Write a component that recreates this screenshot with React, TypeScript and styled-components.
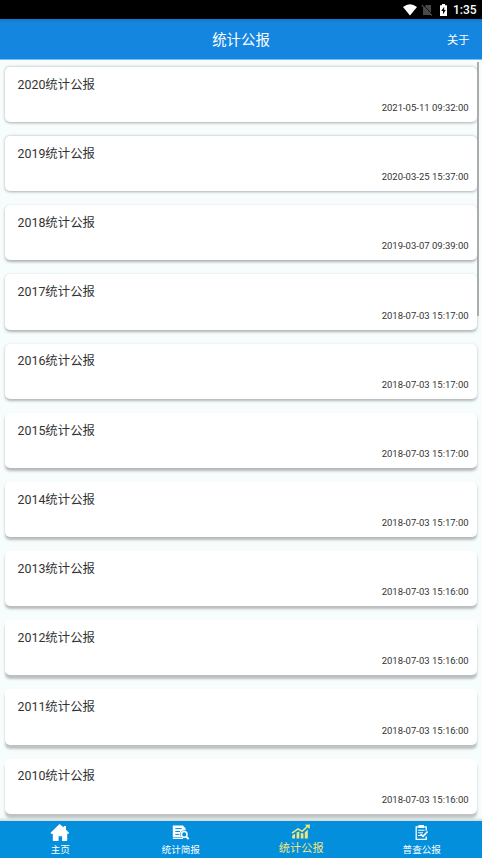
import React from "react";
import styled, { createGlobalStyle } from "styled-components";

const GlobalStyle = createGlobalStyle`
  * { box-sizing: border-box; }
  html, body { margin: 0; padding: 0; overflow: hidden; }
  body { font-family: Roboto, "Noto Sans CJK SC", sans-serif; }
`;

const Screen = styled.div`
  display: flex;
  flex-direction: column;
  width: 482px;
  height: 858px;
  overflow: hidden;
  background: #f7fdfd;
`;

const StatusBar = styled.div`
  flex: none;
  display: flex;
  align-items: center;
  height: 19px;
  padding-left: 403px;
  background: #000;
`;

const StatusIcon = styled.svg<{ $gap: number }>`
  flex: none;
  display: block;
  margin-right: ${(p) => p.$gap}px;
`;

const Clock = styled.span`
  color: #fff;
  font-size: 12px;
  font-weight: 500;
  line-height: 19px;
  white-space: nowrap;
  padding-top: 2px;
`;

const Header = styled.header`
  flex: none;
  display: grid;
  grid-template-columns: 1fr auto 1fr;
  align-items: center;
  height: 41px;
  padding: 2px 12.5px 0;
  background: linear-gradient(#1276c8 0, #1586df 4px, #1586df 40px, #78bdf0 40px);
  color: #fff;
`;

const Title = styled.h1`
  grid-column: 2;
  margin: 0;
  font-size: 14.4px;
  font-weight: 400;
  line-height: 22px;
`;

const About = styled.span`
  justify-self: end;
  font-size: 11.2px;
  line-height: 18px;
`;

const Content = styled.main`
  flex: 1;
  min-height: 0;
  display: flex;
  overflow: hidden;
  background: linear-gradient(#f7fdfd 0, #f7fdfd 757px, #d3d9d9 761px);
`;

const List = styled.div`
  flex: none;
  display: flex;
  flex-direction: column;
  gap: 14px;
  width: 477px;
  padding: 7px 0 0 5px;
`;

const Card = styled.article<{ $depth: number }>`
  flex: none;
  display: flex;
  flex-direction: column;
  justify-content: space-between;
  height: 55.17px;
  padding: 7.8px 8.4px 7px 12.5px;
  border-radius: 5px;
  background: #fff;
  box-shadow: 0 ${(p) => 0.4 + p.$depth * 0.36}px ${(p) => 3 - p.$depth * 0.06}px
    rgba(0, 0, 0, ${(p) => 0.32 - p.$depth * 0.009});
`;

const CardTitle = styled.h2`
  margin: 0;
  color: #333;
  font-size: 12.4px;
  font-weight: 400;
  line-height: 20px;
`;

const CardTime = styled.time`
  align-self: flex-end;
  color: #333;
  font-size: 9.5px;
  line-height: 14px;
`;

const ScrollThumb = styled.div`
  flex: none;
  width: 2px;
  height: 254px;
  margin-top: 2px;
  background: #a9adad;
`;

const Nav = styled.nav`
  flex: none;
  display: grid;
  grid-template-columns: repeat(4, 1fr);
  height: 37px;
  background: #048fdc;
`;

const NavItem = styled.a<{ $active?: boolean }>`
  display: flex;
  flex-direction: column;
  align-items: center;
  padding-top: 3px;
  color: ${(p) => (p.$active ? "#f0e67c" : "#fff")};
  font-size: ${(p) => (p.$active ? 11.2 : 9.6)}px;
  line-height: 14px;
`;

const NavIcon = styled.svg`
  display: block;
  flex: none;
  margin-bottom: 1px;
`;

const reports = [
  ["2020", "2021-05-11 09:32:00"],
  ["2019", "2020-03-25 15:37:00"],
  ["2018", "2019-03-07 09:39:00"],
  ["2017", "2018-07-03 15:17:00"],
  ["2016", "2018-07-03 15:17:00"],
  ["2015", "2018-07-03 15:17:00"],
  ["2014", "2018-07-03 15:17:00"],
  ["2013", "2018-07-03 15:16:00"],
  ["2012", "2018-07-03 15:16:00"],
  ["2011", "2018-07-03 15:16:00"],
  ["2010", "2018-07-03 15:16:00"],
];

const HomeIcon = () => (
  <NavIcon width="20" height="18" viewBox="0 0 20 18">
    <path d="M9.6 0 L13.8 3.6 V2 H16 V5.7 L18.8 8.5 V9.7 H17.2 V16.2 Q17.2 17 16.4 17 H12.1 V12.2 H8.6 V17 H3.6 Q2.8 17 2.8 16.2 V9.7 H0.8 V8.5 Z" fill="#fff" />
  </NavIcon>
);

const BriefIcon = () => (
  <NavIcon width="18" height="18" viewBox="0 0 18 18">
    <path d="M0.8 1.5 H11 L13.6 4.5 V6.4 Q8.8 6 8.2 10 Q8 12 9.2 13 H0.8 Z" fill="#fff" />
    <path d="M3.3 4.6 H9.6 M3.3 7.5 H8 M3.3 10.4 H7.4" stroke="#048fdc" strokeWidth="1" />
    <path d="M0.8 14.3 H11" stroke="#fff" strokeWidth="1.4" />
    <circle cx="12.2" cy="10.4" r="2.8" fill="none" stroke="#fff" strokeWidth="1.5" />
    <path d="M14.1 12.5 L16.6 15" stroke="#fff" strokeWidth="1.8" />
  </NavIcon>
);

const ChartIcon = () => (
  <NavIcon width="20" height="17" viewBox="0 0 20 17">
    <g fill="#f0e67c">
      <path d="M1.2 11.5 L4 9.7 V14.5 H1.2 Z M5.6 8.5 L8.3 7.5 V14.5 H5.6 Z M9.8 9 L12.4 9.5 V14.5 H9.8 Z M13.8 8.5 L16.8 5.5 V14.5 H13.8 Z" />
      <path d="M13.8 0.8 L19 0.4 L18.5 5.1 Z" />
    </g>
    <path d="M1 9.2 L7 4.8 L11.2 7.4 L16.8 2" fill="none" stroke="#f0e67c" strokeWidth="1.5" />
  </NavIcon>
);

const CensusIcon = () => (
  <NavIcon width="16" height="18" viewBox="0 0 16 18">
    <path d="M12.2 6.8 V2.8 H2.2 V15.3 H12.2 V12.5" fill="none" stroke="#fff" strokeWidth="1.3" />
    <path d="M4.5 1 H10 V4 H4.5 Z" fill="#fff" />
    <path d="M4 6.2 H10.5 M4 8.8 H9 M4 11.5 H7" stroke="#fff" strokeWidth="1.1" />
    <path d="M6.6 10.2 L9 12.4 L13.6 7.5" fill="none" stroke="#fff" strokeWidth="1.6" />
  </NavIcon>
);

export default function App() {
  return (
    <>
      <GlobalStyle />
      <Screen>
        <StatusBar>
          <StatusIcon $gap={4} width="14" height="12" viewBox="0 0 14 12">
            <path d="M0 3 Q7 -2.5 14 3 L7 11.5 Z" fill="#fff" />
          </StatusIcon>
          <StatusIcon $gap={7} width="12" height="12" viewBox="0 0 12 12">
            <path d="M5 1 H10 V11 H2 V4 Z" fill="#484848" />
            <path d="M1.8 1.2 L11 10.6" stroke="#000" strokeWidth="1.2" />
            <path d="M0.8 1.2 L10.8 11.4" stroke="#555" strokeWidth="1.2" />
          </StatusIcon>
          <StatusIcon $gap={6} width="7" height="12" viewBox="0 0 7 12">
            <path d="M2 0 H5 V1.2 H7 V12 H0 V1.2 H2 Z" fill="#fff" />
            <path d="M4.2 2.8 L1.2 7 H3 V10.2 L5.8 5.9 H4.2 Z" fill="#000" />
          </StatusIcon>
          <Clock>1:35</Clock>
        </StatusBar>
        <Header>
          <Title>统计公报</Title>
          <About>关于</About>
        </Header>
        <Content>
          <List>
            {reports.map(([year, time], index) => (
              <Card key={year} $depth={index}>
                <CardTitle>{year}统计公报</CardTitle>
                <CardTime>{time}</CardTime>
              </Card>
            ))}
          </List>
          <ScrollThumb />
        </Content>
        <Nav>
          <NavItem><HomeIcon />主页</NavItem>
          <NavItem><BriefIcon />统计简报</NavItem>
          <NavItem $active><ChartIcon />统计公报</NavItem>
          <NavItem><CensusIcon />普查公报</NavItem>
        </Nav>
      </Screen>
    </>
  );
}
